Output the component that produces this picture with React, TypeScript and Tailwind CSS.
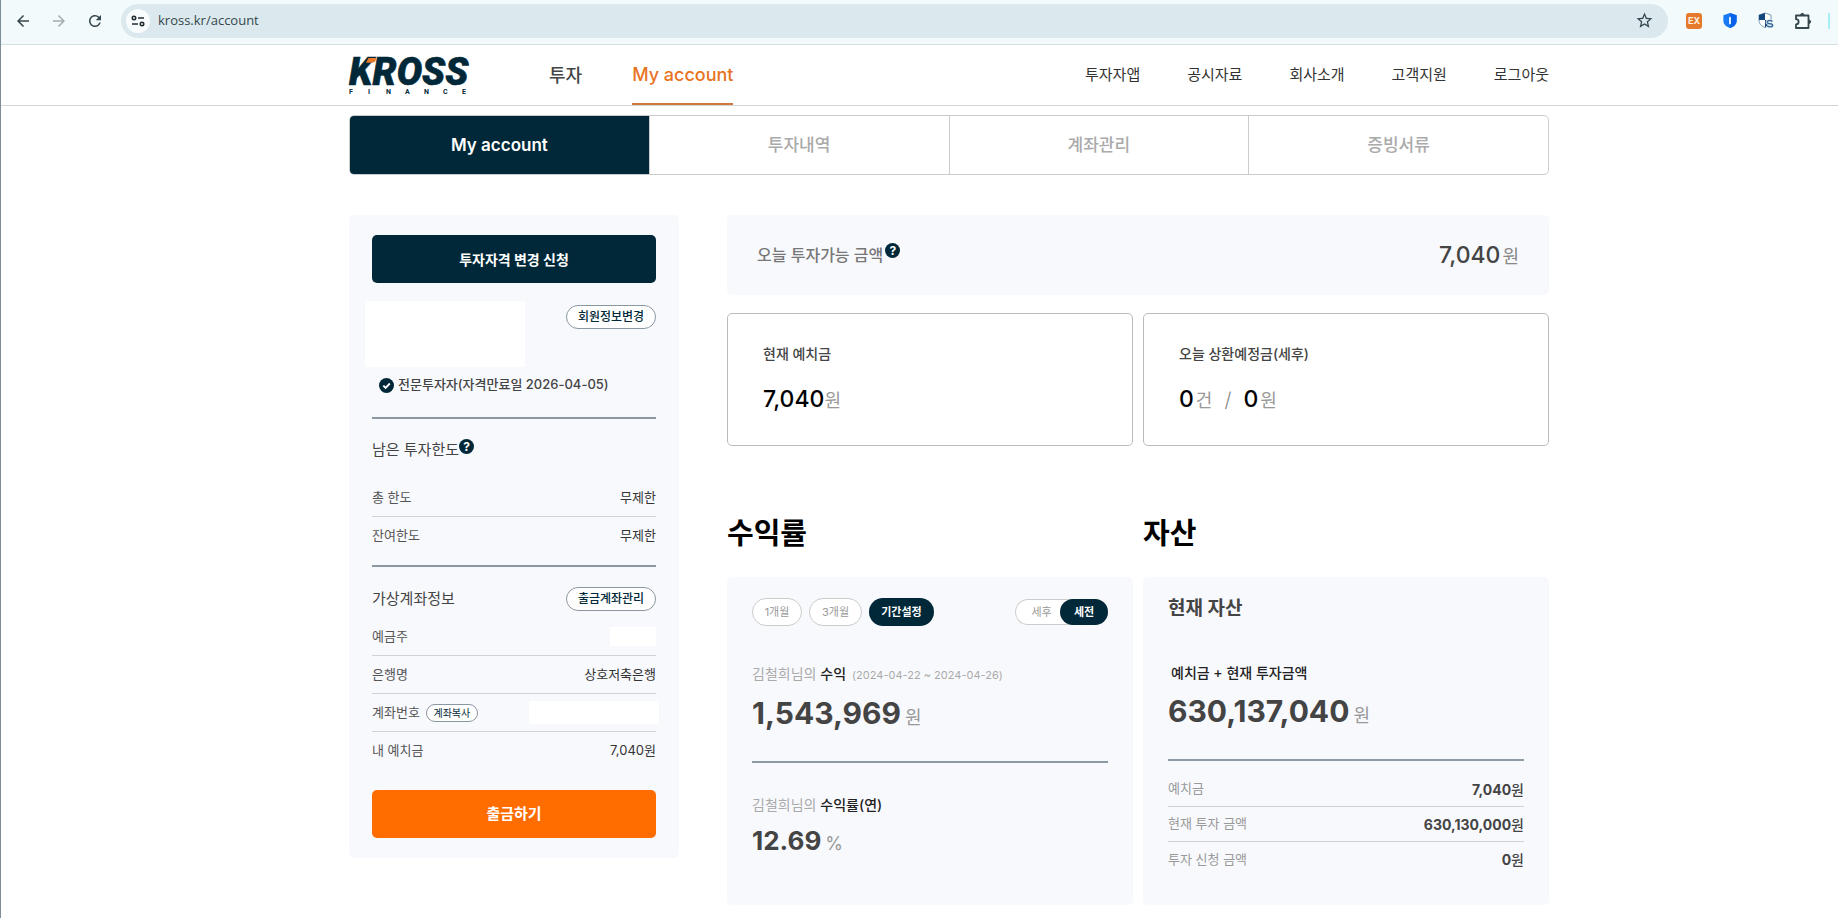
import type { ReactNode } from "react";
import { MdArrowBack, MdArrowForward, MdRefresh, MdStarBorder } from "react-icons/md";

const mainMenu = ["투자자앱", "공시자료", "회사소개", "고객지원", "로그아웃"];
const tabs = ["My account", "투자내역", "계좌관리", "증빙서류"];

const assets = [
  { label: "예치금", value: "7,040" },
  { label: "현재 투자 금액", value: "630,130,000" },
  { label: "투자 신청 금액", value: "0" },
];

const ShieldIcon = () => (
  <svg viewBox="0 0 16 18" className="h-[17px] w-4">
    <path d="M8 1 15 3.4V9c0 4.200-3 6.600-7 8-4-1.400-7-3.800-7-8V3.400Z" fill="#1a7af5" />
    <path d="M8 1 15 3.4V9c0 4.200-3 6.600-7 8Z" fill="#0b62e8" />
    <rect x="7" y="5" width="2" height="8" rx="0.5" fill="#e8f4ff" />
  </svg>
);

const ScanShieldIcon = () => (
  <svg viewBox="0 0 16 17" className="h-[17px] w-4">
    <path d="M7 1 13 3v5c0 4-2.500 6-6 7.500C3.500 14 1 12 1 8V3Z" fill="#fff" stroke="#6b8fb0" strokeWidth="0.9" />
    <path d="M7 1v7H1V3Z" fill="#12477e" />
    <path d="M7 8h6c0 4-2.500 6-6 7.500Z" fill="#12477e" />
    <path d="M14.300 9.600c-.8-1.400-5-1.500-5 .6s5.400.9 5.400 3c0 2-4.600 2.100-5.600.4" fill="none" stroke="#f3fafc" strokeWidth="3.200" />
    <path d="M14.300 9.600c-.8-1.400-5-1.500-5 .6s5.400.9 5.400 3c0 2-4.600 2.100-5.600.4" fill="none" stroke="#3d6c9b" strokeWidth="1.500" />
  </svg>
);

const PuzzleIcon = () => (
  <svg viewBox="0 0 18 18" className="size-[18px]" fill="none" stroke="#35474c" strokeWidth="1.800" strokeLinejoin="round">
    <path d="M2 3.500h12.500v12.500H2v-3.600a2.600 2.600 0 0 0 0-5.200Z" />
    <path d="M6.600 3a1.700 1.700 0 0 1 3.400 0ZM15 8a1.700 1.700 0 0 1 0 3.400Z" fill="#35474c" strokeWidth="0.800" />
  </svg>
);

const SiteInfoIcon = () => (
  <svg viewBox="0 0 14 12" className="h-3 w-3.5" fill="none" stroke="#1f2b2e" strokeWidth="1.600">
    <circle cx="3" cy="3" r="1.700" />
    <path d="M7 3h6M1 9h6" />
    <circle cx="11" cy="9" r="1.700" />
  </svg>
);

const HelpButton = () => (
  <button
    type="button"
    aria-label="도움말"
    className="flex size-[15px] items-center justify-center rounded-full bg-[#002838] text-[12px] leading-none font-bold text-white"
  >
    ?
  </button>
);

const CheckIcon = () => (
  <svg viewBox="0 0 15 15" className="size-[15px]">
    <circle cx="7.500" cy="7.500" r="7.500" fill="#002838" />
    <path d="m4.300 7.600 2.300 2.200 4.200-4.300" fill="none" stroke="#fff" strokeWidth="1.900" />
  </svg>
);

const PillButton = ({ children }: { children: ReactNode }) => (
  <button
    type="button"
    className="h-6 w-[90px] rounded-full border border-[#8997a0] bg-white text-[12px] font-medium text-[#002838]"
  >
    {children}
  </button>
);

const BrowserBar = () => (
  <div className="flex h-[45px] items-center border-b border-[#d5e0e4] bg-[#f3fafc] pb-[3px] pl-[13px] text-[#35474c]">
    <div className="flex gap-[18px]">
      <button type="button" aria-label="뒤로"><MdArrowBack size={18} /></button>
      <button type="button" aria-label="앞으로" className="text-[#a3adb0]"><MdArrowForward size={18} /></button>
      <button type="button" aria-label="새로고침"><MdRefresh size={18} /></button>
    </div>
    <div className="ml-[17px] flex h-[34px] flex-1 items-center rounded-full bg-[#dbe9ee] pr-3.5 pl-[5px]">
      <button type="button" aria-label="사이트 정보" className="flex size-6 items-center justify-center rounded-full bg-[#f8fcfd]">
        <SiteInfoIcon />
      </button>
      <input
        aria-label="주소"
        defaultValue="kross.kr/account"
        className="ml-2 min-w-0 flex-1 bg-transparent font-['Open_Sans',sans-serif] text-[13px] text-[#35474c] outline-none"
      />
      <button type="button" aria-label="북마크"><MdStarBorder size={19} /></button>
    </div>
    <div className="ml-[18px] flex items-center gap-5">
      <button type="button" className="size-4 rounded-[3px] bg-[#e57a2c] text-[9px] leading-none font-bold text-[#fff1e0]">EX</button>
      <button type="button" aria-label="보안"><ShieldIcon /></button>
      <button type="button" aria-label="검사"><ScanShieldIcon /></button>
      <button type="button" aria-label="확장 프로그램"><PuzzleIcon /></button>
    </div>
    <div className="mr-2 ml-4 h-4 w-0.5 bg-[#a5eef6]" />
  </div>
);

const Logo = () => (
  <a href="#" aria-label="KROSS FINANCE" className="block w-[124px]">
    <svg viewBox="0 -8 124 54" className="h-[54px] w-[124px] overflow-visible">
      <g fill="#002838" fontFamily="Roboto, sans-serif">
        <text x="0" y="29" fontSize="38" fontWeight="900" fontStyle="italic" stroke="#002838" strokeWidth="0.600">KROSS</text>
        <g fontSize="7" fontWeight="700">
          <text x="0" y="38">F</text>
          <text x="19" y="38">I</text>
          <text x="37" y="38">N</text>
          <text x="56" y="38">A</text>
          <text x="75" y="38">N</text>
          <text x="94" y="38">C</text>
          <text x="113" y="38">E</text>
        </g>
      </g>
      <path d="M19.500 2h8l-1.500 3.700-2.500 1h-6.500Z" fill="#e8792b" />
    </svg>
  </a>
);

const Header = () => (
  <header className="border-b border-[#d4d4d4] pl-[59px]">
    <div className="mx-auto flex h-[60px] max-w-[1200px] items-center">
      <Logo />
      <nav className="ml-[76px] flex h-full items-center gap-[50px] text-[18px] font-medium">
        <a href="#" className="text-[#444]">투자</a>
        <a href="#" className="flex h-full items-center border-b-2 border-[#d0783a] text-[#e8731f]">My account</a>
      </nav>
      <nav className="ml-auto flex gap-[47px] text-[15px] text-[#333]">
        {mainMenu.map((item) => (
          <a key={item} href="#">{item}</a>
        ))}
      </nav>
    </div>
  </header>
);

const TabBar = () => (
  <nav className="flex h-[60px] overflow-hidden rounded-[5px] border border-[#ccc] text-[17px]">
    {tabs.map((tab, i) => (
      <a
        key={tab}
        href="#"
        className={
          i === 0
            ? "flex flex-1 items-center justify-center bg-[#002838] pt-0.5 font-semibold text-white"
            : "flex flex-1 items-center justify-center border-l border-[#ccc] pt-0.5 font-medium text-[#aaa]"
        }
      >
        {tab}
      </a>
    ))}
  </nav>
);

const Row = ({ label, children }: { label: ReactNode; children: ReactNode }) => (
  <div className="flex h-[38px] items-center justify-between border-b border-[#cfd3d8] text-[13px] last:border-b-0">
    <dt className="flex items-center gap-1.5 text-[#555]">{label}</dt>
    <dd className="text-[#333]">{children}</dd>
  </div>
);

const Sidebar = () => (
  <aside className="w-[330px] shrink-0 rounded-[5px] bg-[#f8f9fd] px-[23px] py-5">
    <button type="button" className="h-12 w-full rounded-[5px] bg-[#002838] text-[14px] font-bold text-white">
      투자자격 변경 신청
    </button>
    <div className="mt-[18px] flex items-start justify-between">
      <div className="-ml-[7px] h-[66px] w-40 bg-white" />
      <div className="flex pt-1"><PillButton>회원정보변경</PillButton></div>
    </div>
    <p className="mt-2 flex h-5 items-center gap-1 pl-[7px] text-[13px] font-medium text-[#444]">
      <CheckIcon />
      전문투자자(자격만료일 2026-04-05)
    </p>

    <section className="mt-[22px] border-t-2 border-[#8b98a3] pt-5">
      <h2 className="flex items-start text-[15px] leading-[22px] text-[#444]">
        남은 투자한도
        <HelpButton />
      </h2>
      <dl className="mt-[18px]">
        <Row label="총 한도">무제한</Row>
        <Row label="잔여한도">무제한</Row>
      </dl>
    </section>

    <section className="mt-2.5 border-t-2 border-[#8b98a3] pt-5">
      <div className="flex items-center justify-between">
        <h2 className="text-[15px] text-[#444]">가상계좌정보</h2>
        <PillButton>출금계좌관리</PillButton>
      </div>
      <dl className="mt-[7px]">
        <Row label="예금주"><div className="h-[19px] w-[46px] bg-white" /></Row>
        <Row label="은행명">상호저축은행</Row>
        <Row
          label={
            <>
              계좌번호
              <button type="button" className="h-[18px] w-[52px] rounded-full border border-[#8997a0] bg-white text-[10px] leading-none text-[#002838]">
                계좌복사
              </button>
            </>
          }
        >
          <div className="-mr-[3px] h-[23px] w-[130px] bg-white" />
        </Row>
        <Row label="내 예치금">7,040원</Row>
      </dl>
    </section>
    <button type="button" className="mt-5 h-12 w-full rounded-[5px] bg-[#ff6c00] text-[15px] font-bold text-white">
      출금하기
    </button>
  </aside>
);

const Summary = () => (
  <>
    <section className="flex h-20 items-center justify-between rounded-[5px] bg-[#f8f9fd] px-[30px]">
      <h2 className="flex items-start gap-0.5 text-[16px] font-medium text-[#777]">
        오늘 투자가능 금액
        <HelpButton />
      </h2>
      <p className="text-[23px] font-medium text-[#444]">
        7,040<span className="ml-0.5 text-[18px] font-normal text-[#888]">원</span>
      </p>
    </section>
    <div className="mt-[18px] grid grid-cols-2 gap-2.5">
      <section className="h-[133px] rounded-[5px] border border-[#bbb] px-[35px] pt-7">
        <h2 className="text-[14px] leading-6 font-medium text-[#444]">현재 예치금</h2>
        <p className="mt-[15px] text-[23px] leading-9 font-medium text-black">
          7,040<span className="text-[18px] font-normal text-[#999]">원</span>
        </p>
      </section>
      <section className="h-[133px] rounded-[5px] border border-[#bbb] px-[35px] pt-7">
        <h2 className="text-[14px] leading-6 font-medium text-[#444]">오늘 상환예정금(세후)</h2>
        <p className="mt-[15px] text-[23px] leading-9 font-medium text-black">
          0<span className="ml-0.5 text-[18px] font-normal text-[#999]">건</span>
          <span className="mx-3 text-[20px] font-light text-[#888]">/</span>
          0<span className="ml-0.5 text-[18px] font-normal text-[#999]">원</span>
        </p>
      </section>
    </div>
  </>
);

const Profit = () => (
  <section>
    <h2 className="text-[29px] leading-[42px] font-bold text-black">수익률</h2>
    <div className="mt-[22px] h-[328px] rounded-[5px] bg-[#f8f9fd] px-[25px] pt-[21px]">
      <div className="flex items-center justify-between text-[11px]">
        <div className="flex gap-[7px]">
          <button type="button" className="h-7 w-[50px] rounded-full border border-[#ccc] bg-white text-[#999]">1개월</button>
          <button type="button" className="h-7 w-[53px] rounded-full border border-[#ccc] bg-white text-[#999]">3개월</button>
          <button type="button" className="h-7 w-[65px] rounded-full bg-[#002838] font-bold text-white">기간설정</button>
        </div>
        <div className="flex h-[26px] w-[93px] rounded-full bg-white ring-1 ring-[#ccc] ring-inset">
          <button type="button" className="flex-1 pl-2 text-[#999]">세후</button>
          <button type="button" className="w-12 rounded-full bg-[#002838] font-bold text-white">세전</button>
        </div>
      </div>
      <h3 className="mt-9 text-[14px] leading-6 font-normal text-[#aaa]">
        김철희님의 <strong className="font-medium text-[#222]">수익</strong>
        <span className="ml-1.5 text-[11px]">(2024-04-22 ~ 2024-04-26)</span>
      </h3>
      <p className="mt-1.5 text-[30px] leading-10 font-bold text-[#444]">
        1,543,969<span className="ml-1 text-[18px] font-normal text-[#999]">원</span>
      </p>
      <hr className="mt-[23px] border-t-2 border-[#8b9aa3]" />
      <h3 className="mt-[30px] text-[14px] leading-6 font-normal text-[#aaa]">
        김철희님의 <strong className="font-medium text-[#222]">수익률(연)</strong>
      </h3>
      <p className="mt-1 text-[26px] leading-10 font-bold text-[#444]">
        12.69<span className="ml-1 text-[18px] font-normal text-[#999]">%</span>
      </p>
    </div>
  </section>
);

const Assets = () => (
  <section>
    <h2 className="text-[29px] leading-[42px] font-bold text-black">자산</h2>
    <div className="mt-[22px] h-[328px] rounded-[5px] bg-[#f8f9fd] px-[25px] pt-[18px]">
      <h3 className="text-[19px] leading-7 font-bold text-[#444]">현재 자산</h3>
      <h4 className="mt-[38px] pl-[3px] text-[14px] leading-6 font-medium text-[#222]">예치금 + 현재 투자금액</h4>
      <p className="mt-1.5 text-[30px] leading-10 font-bold text-[#444]">
        630,137,040<span className="ml-1 text-[18px] font-normal text-[#999]">원</span>
      </p>
      <hr className="mt-[23px] border-t-2 border-[#8b9aa3]" />
      <dl className="mt-[11px]">
        {assets.map(({ label, value }) => (
          <div key={label} className="flex h-[35px] items-center justify-between border-b border-[#cfd3d8] last:border-b-0">
            <dt className="text-[13px] text-[#999]">{label}</dt>
            <dd className="text-[14px] font-bold text-[#444]">
              {value}<span className="font-medium">원</span>
            </dd>
          </div>
        ))}
      </dl>
    </div>
  </section>
);

export default function App() {
  return (
    <div className="min-h-screen border-l border-[#7d8d96] bg-white font-[Inter,'Noto_Sans_CJK_KR',sans-serif]">
      <BrowserBar />
      <Header />
      <main className="pl-[59px]">
        <div className="mx-auto max-w-[1200px] pt-[9px] pb-3">
          <TabBar />
          <div className="mt-10 flex items-start gap-12">
            <Sidebar />
            <div className="min-w-0 flex-1">
              <Summary />
              <div className="mt-[67px] grid grid-cols-2 gap-2.5">
                <Profit />
                <Assets />
              </div>
            </div>
          </div>
        </div>
      </main>
    </div>
  );
}
